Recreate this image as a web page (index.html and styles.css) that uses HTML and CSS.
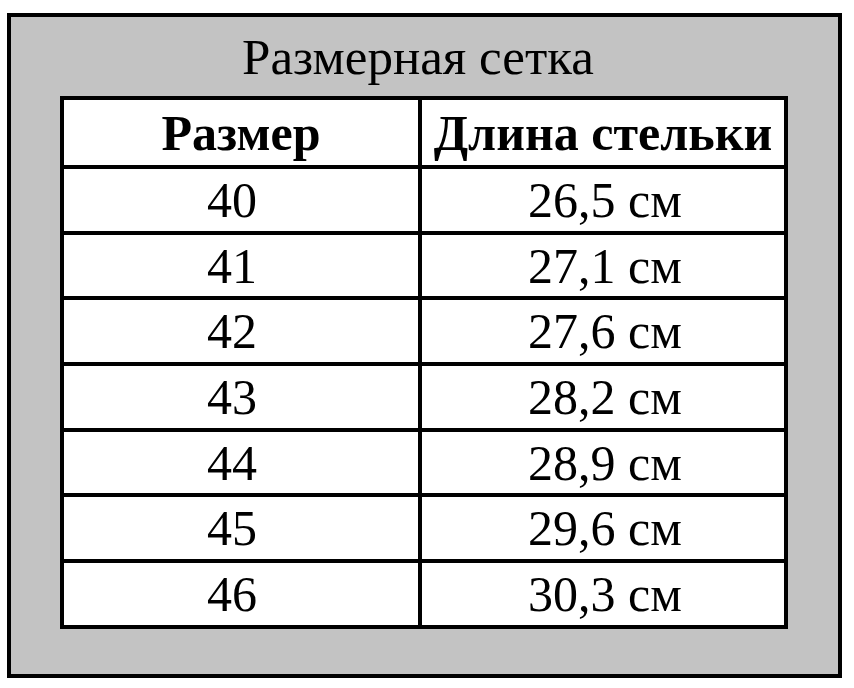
FILE: index.html
```html
<!DOCTYPE html>
<html lang="ru">
<head>
<meta charset="utf-8">
<title>Размерная сетка</title>
<link rel="stylesheet" href="styles.css">
</head>
<body>
<div class="frame">
  <h1 class="title">Размерная сетка</h1>
  <table class="sizes">
    <thead>
      <tr>
        <th class="col-size">Размер</th>
        <th class="col-len">Длина стельки</th>
      </tr>
    </thead>
    <tbody>
      <tr><td class="col-size">40</td><td class="col-len">26,5 см</td></tr>
      <tr><td class="col-size">41</td><td class="col-len">27,1 см</td></tr>
      <tr><td class="col-size">42</td><td class="col-len">27,6 см</td></tr>
      <tr><td class="col-size">43</td><td class="col-len">28,2 см</td></tr>
      <tr><td class="col-size">44</td><td class="col-len">28,9 см</td></tr>
      <tr><td class="col-size">45</td><td class="col-len">29,6 см</td></tr>
      <tr><td class="col-size">46</td><td class="col-len">30,3 см</td></tr>
    </tbody>
  </table>
</div>
</body>
</html>
```

FILE: styles.css
```css
html, body {
  margin: 0;
  padding: 0;
  background: #ffffff;
}

body {
  width: 854px;
  height: 688px;
  font-family: "Liberation Serif", Tinos, "DejaVu Serif", serif;
  color: #000;
}

.frame {
  box-sizing: border-box;
  margin: 13px 0 0 7px;
  width: 835px;
  height: 665px;
  border: 4px solid #000;
  background: #c3c3c3;
  padding: 0 50px 0 49px;
}

.title {
  margin: 0;
  padding: 14px 0 12px;
  font-family: "Liberation Serif", Tinos, "DejaVu Serif", serif;
  font-weight: normal;
  font-size: 51px;
  line-height: 53px;
  text-align: center;
  transform: translateX(-6px);
}

.sizes {
  box-sizing: border-box;
  width: 728px;
  border: 4px solid #000;
  border-collapse: separate;
  border-spacing: 0;
  background: #fff;
  table-layout: fixed;
}

.sizes th,
.sizes td {
  padding: 0;
  font-family: "Liberation Serif", Tinos, "DejaVu Serif", serif;
  text-align: center;
  vertical-align: middle;
  line-height: 50px;
  font-size: 50px;
  white-space: nowrap;
}

.sizes th {
  font-weight: bold;
  height: 65px;
}

.sizes td {
  box-sizing: border-box;
  height: 65.7px;
  border-top: 4px solid #000;
}

.sizes .col-size {
  width: 354px;
}

.sizes td.col-size {
  padding-right: 18px;
}

.sizes .col-len {
  border-left: 4px solid #000;
}

.sizes td.col-len {
  padding-left: 4px;
}
```
